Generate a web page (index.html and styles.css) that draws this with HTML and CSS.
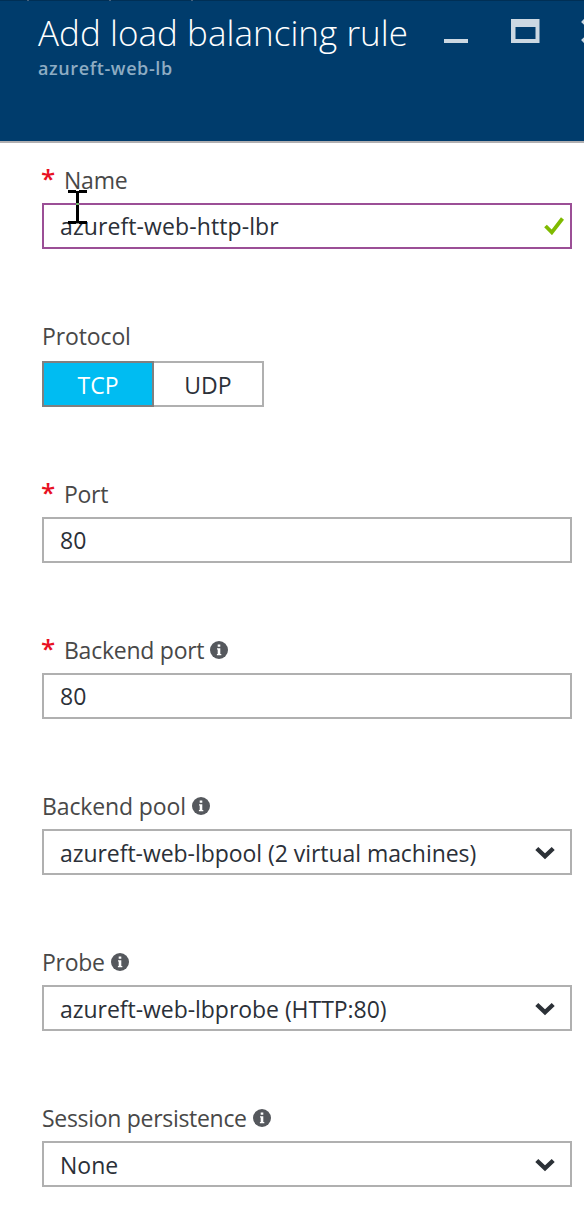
FILE: index.html
```html
<!DOCTYPE html>
<html lang="en">
<head>
<meta charset="utf-8">
<title>Add load balancing rule</title>
<link rel="stylesheet" href="styles.css">
</head>
<body>
<svg class="defs" width="0" height="0" aria-hidden="true">
  <symbol id="info" viewBox="0 0 18 18"><circle cx="9" cy="9" r="9" fill="#55585d"/><path d="M7.700 3.500h2.600v2.300H7.700zM7 7.200h3.300v5.700h1v1.300H6.900v-1.300h.8V8.500H7z" fill="#fff"/></symbol>
  <symbol id="chevron" viewBox="0 0 20 14"><path d="M1.800 2.500 10 10.300l8.200-7.800" fill="none" stroke="#2c3137" stroke-width="4.400"/></symbol>
</svg>
<header class="blade-header">
  <div class="tabs-edge"><i></i><i></i><i></i></div>
  <div class="heading">
    <h1>Add load balancing rule</h1>
    <p>azureft-web-lb</p>
  </div>
  <div class="controls">
    <svg class="minimize" width="24" height="4"><path d="M0 0h24v4H0z" fill="#ccd8e2"/></svg>
    <svg class="maximize" width="29" height="24"><path fill-rule="evenodd" d="M0 0h28.500v24H0zM4.500 8v12h20V8z" fill="#ccd8e2"/></svg>
    <svg class="close" width="24" height="24"><path d="M1.500 1.500l21 21M22.500 1.500l-21 21" stroke="#ccd8e2" stroke-width="4"/></svg>
  </div>
</header>
<main class="form">
  <section class="field">
    <div class="label"><b class="required">*</b><span class="w-name">Name</span></div>
    <div class="box valid"><span class="w-name-value">azureft-web-http-lbr</span>
      <svg class="check" width="20" height="18" viewBox="0 0 20 18"><path d="M1.500 9 7.800 15.300 18.500 1.500" fill="none" stroke="#7fba00" stroke-width="3.800"/></svg></div>
    <svg class="cursor" width="19" height="34" viewBox="0 0 19 34"><path d="M0 0h8v1h3V0h8v3h-8v28h8v3h-8v-1H8v1H0v-3h8V3H0z"/><path d="M8 13h3v2H8z" fill="#68b565"/></svg>
  </section>
  <section class="field protocol">
    <div class="label"><span class="w-protocol">Protocol</span></div>
    <div class="toggle"><div class="option selected"><span>TCP</span></div><div class="option"><span>UDP</span></div></div>
  </section>
  <section class="field">
    <div class="label"><b class="required">*</b><span class="w-port">Port</span></div>
    <div class="box raised"><span>80</span></div>
  </section>
  <section class="field">
    <div class="label"><b class="required">*</b><span class="w-bport">Backend port</span><svg class="info"><use href="#info"/></svg></div>
    <div class="box raised"><span>80</span></div>
  </section>
  <section class="field">
    <div class="label"><span class="w-pool">Backend pool</span><svg class="info"><use href="#info"/></svg></div>
    <div class="box"><span class="w-pool-value">azureft-web-lbpool (2 virtual machines)</span><svg class="chevron"><use href="#chevron"/></svg></div>
  </section>
  <section class="field">
    <div class="label"><span class="w-probe">Probe</span><svg class="info"><use href="#info"/></svg></div>
    <div class="box"><span class="w-probe-value">azureft-web-lbprobe (HTTP:80)</span><svg class="chevron"><use href="#chevron"/></svg></div>
  </section>
  <section class="field">
    <div class="label"><span class="w-session">Session persistence</span><svg class="info"><use href="#info"/></svg></div>
    <div class="box"><span>None</span><svg class="chevron"><use href="#chevron"/></svg></div>
  </section>
</main>
</body>
</html>
```
FILE: styles.css
```css
* { box-sizing: border-box; }
body { margin: 0; width: 584px; height: 1226px; overflow: hidden; background: #fff; color: #2b3038; font: 23px/32px "Open Sans", "Noto Sans", sans-serif; }
svg { display: block; flex: none; }
.defs { position: absolute; }
span { white-space: nowrap; }
.blade-header { position: relative; display: flex; height: 143px; padding: 11px 0 0 38px; background: #003c6c; border-bottom: 2px solid #b0afb1; overflow: hidden; }
.tabs-edge { position: absolute; top: 0; left: 0; width: 584px; height: 1px; background: #002f55; display: flex; gap: 80px; padding-left: 27px; }
.tabs-edge i { width: 2px; height: 1px; background: #44617d; }
.heading { width: 406px; flex: none; }
h1 { margin: 0; font-size: 35px; font-weight: 300; line-height: 44px; letter-spacing: 0.04px; color: #fff; }
p { margin: 0; font-size: 18px; font-weight: 600; line-height: 26px; letter-spacing: 0.6px; color: #8eacc3; }
.controls { display: flex; align-items: flex-start; flex: none; padding-top: 8px; }
.minimize { margin: 20px 43px 0 0; }
.maximize { margin-right: 41px; }
.form { padding: 20px 12px 0 42px; }
.field { position: relative; height: 156px; }
.label { display: flex; align-items: center; height: 40px; padding-bottom: 6px; color: #484848; }
.required { width: 22px; padding-bottom: 5px; color: #e81123; font-size: 26px; font-weight: 600; line-height: 32px; text-indent: -1px; }
.box { display: flex; align-items: center; justify-content: space-between; height: 46px; padding: 1px 16px 0; border: 2px solid #b0b0b0; }
.valid { border-color: #9b4f96; padding: 0 6px 0 16px; }
.raised { padding-top: 0; padding-bottom: 1px; }
.cursor { position: absolute; left: 26px; top: 27px; }
.protocol { height: 158px; }
.protocol .label { height: 42px; padding-bottom: 8px; }
.toggle { display: flex; width: 222px; height: 46px; border: 2px solid #b0b0b0; }
.option { flex: 1; display: flex; align-items: center; justify-content: center; padding-top: 2px; }
.selected { flex: 0 0 112px; margin: -2px 0 -2px -2px; border: 2px solid #808080; background: #00bcf2; color: #fff; }
.info { width: 18px; height: 18px; margin-left: 6px; }
.chevron { width: 20px; height: 14px; margin-right: -1px; }
.w-name { letter-spacing: -0.2px; }
.w-name-value { letter-spacing: 0.1px; }
.w-protocol { letter-spacing: -0.12px; }
.w-port { letter-spacing: -0.3px; }
.w-bport { letter-spacing: -0.25px; }
.w-pool { letter-spacing: -0.12px; }
.w-pool-value { letter-spacing: -0.05px; }
.w-probe { letter-spacing: -0.3px; }
.w-probe-value { letter-spacing: -0.04px; }
.w-session { letter-spacing: -0.3px; }
```
